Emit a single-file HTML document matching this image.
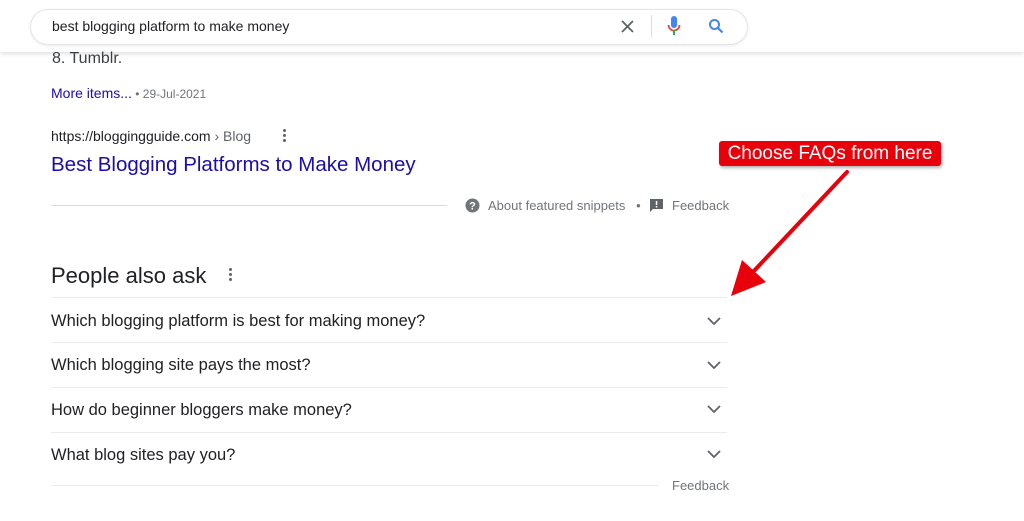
<!DOCTYPE html>
<html><head><style>
body{margin:0;width:1024px;height:521px;background:#fff;font-family:"Liberation Sans",Arial,sans-serif;position:relative;overflow:hidden;color:#202124}
.a{position:absolute;white-space:nowrap}
.bar{position:absolute;left:0;top:0;width:1024px;height:52px;background:#fff;box-shadow:0 2px 4px rgba(0,0,0,.12)}
.sb{position:absolute;left:30px;top:9px;width:716px;height:34px;border:1px solid #e4e4e4;border-radius:18px;box-shadow:0 1px 3px rgba(0,0,0,.08)}
.q{position:absolute;left:51px;font-size:16.5px;color:#202124}
.ln{position:absolute;left:51px;width:676px;height:1px;background:#ebebeb}
.chev{position:absolute;left:707px}
.dots{position:absolute;width:3px}
.dots i{display:block;width:3px;height:3px;border-radius:50%;background:#5f6368;margin-bottom:2px}
</style></head><body>
<div class="bar"></div>
<div class="sb"></div>
<div class="a" style="left:52px;top:18px;font-size:14px;color:#202124">best blogging platform to make money</div>
<svg class="a" style="left:620px;top:19px" width="15" height="15" viewBox="0 0 15 15"><path d="M2 2L13 13M13 2L2 13" stroke="#5f6368" stroke-width="1.8"/></svg>
<div class="a" style="left:651px;top:15px;width:1px;height:22px;background:#dadce0"></div>
<svg class="a" style="left:667px;top:15px" width="14" height="22" viewBox="0 0 14 22"><rect x="4" y="1" width="6" height="12" rx="3" fill="#4285f4"/><path d="M1.5 10a5.5 5.5 0 0 0 11 0" stroke="#ea4335" stroke-width="1.8" fill="none"/><rect x="6" y="15" width="2" height="5" fill="#34a853"/></svg>
<svg class="a" style="left:708px;top:18px" width="16" height="16" viewBox="0 0 16 16"><circle cx="6.5" cy="6.5" r="4.5" stroke="#4285f4" stroke-width="2" fill="none"/><path d="M10 10L14.5 14.5" stroke="#4285f4" stroke-width="2.2"/></svg>
<div class="a" style="left:52px;top:50px;font-size:16px;color:#3c4043">8. Tumblr.</div>
<div class="a" style="left:51px;top:85px;font-size:14px"><span style="color:#1a0dab">More items...</span><span style="color:#70757a;font-size:12px"> • 29-Jul-2021</span></div>
<div class="a" style="left:51px;top:128px;font-size:14px;color:#202124">https://bloggingguide.com <span style="color:#5f6368">› Blog</span></div>
<div class="dots" style="left:283px;top:129px"><i></i><i></i><i></i></div>
<div class="a" style="left:51px;top:153px;font-size:20.5px;color:#1a0dab">Best Blogging Platforms to Make Money</div>
<div class="a" style="left:51px;top:205px;width:396px;height:1px;background:#dadce0"></div>
<svg class="a" style="left:465px;top:198px" width="15" height="15" viewBox="0 0 15 15"><circle cx="7.5" cy="7.5" r="7" fill="#70757a"/><text x="7.5" y="11.5" font-size="11" font-weight="bold" fill="#fff" text-anchor="middle" font-family="Liberation Sans">?</text></svg>
<div class="a" style="left:488px;top:198px;font-size:13px;color:#70757a">About featured snippets &nbsp;&nbsp;•</div>
<svg class="a" style="left:650px;top:199px" width="13" height="13" viewBox="0 0 13 13"><path d="M0 0H13V10H3L0 13Z" fill="#5f6368"/><rect x="5.8" y="2" width="1.5" height="4" fill="#fff"/><rect x="5.8" y="7" width="1.5" height="1.5" fill="#fff"/></svg>
<div class="a" style="left:672px;top:198px;font-size:13px;color:#70757a">Feedback</div>
<div class="a" style="left:51px;top:263px;font-size:22px;color:#202124">People also ask</div>
<div class="dots" style="left:229px;top:268px"><i></i><i></i><i></i></div>
<div class="ln" style="top:297px"></div>
<div class="a q" style="top:312px">Which blogging platform is best for making money?</div>
<div class="ln" style="top:342px"></div>
<div class="a q" style="top:356px">Which blogging site pays the most?</div>
<div class="ln" style="top:387px"></div>
<div class="a q" style="top:401px">How do beginner bloggers make money?</div>
<div class="ln" style="top:432px"></div>
<div class="a q" style="top:446px">What blog sites pay you?</div>
<div class="ln" style="top:485px;width:608px"></div>
<div class="a" style="left:672px;top:478px;font-size:13px;color:#70757a">Feedback</div>
<svg class="chev" style="top:317px" width="14" height="9" viewBox="0 0 14 9"><path d="M1 1L7 7L13 1" stroke="#5f6368" stroke-width="1.8" fill="none"/></svg>
<svg class="chev" style="top:361px" width="14" height="9" viewBox="0 0 14 9"><path d="M1 1L7 7L13 1" stroke="#5f6368" stroke-width="1.8" fill="none"/></svg>
<svg class="chev" style="top:405px" width="14" height="9" viewBox="0 0 14 9"><path d="M1 1L7 7L13 1" stroke="#5f6368" stroke-width="1.8" fill="none"/></svg>
<svg class="chev" style="top:450px" width="14" height="9" viewBox="0 0 14 9"><path d="M1 1L7 7L13 1" stroke="#5f6368" stroke-width="1.8" fill="none"/></svg>
<div class="a" style="left:719px;top:141px;width:222px;height:25px;background:#e8000b;border-radius:3px;box-shadow:1px 2px 3px rgba(0,0,0,.3);color:#fff;font-size:19px;line-height:25px;text-align:center">Choose FAQs from here</div>
<svg class="a" style="left:0;top:0" width="1024" height="521"><path d="M847 172L752 273" stroke="#e8000b" stroke-width="4" stroke-linecap="round"/><path d="M731 296L742 260L766 282Z" fill="#e8000b"/></svg>
</body></html>
